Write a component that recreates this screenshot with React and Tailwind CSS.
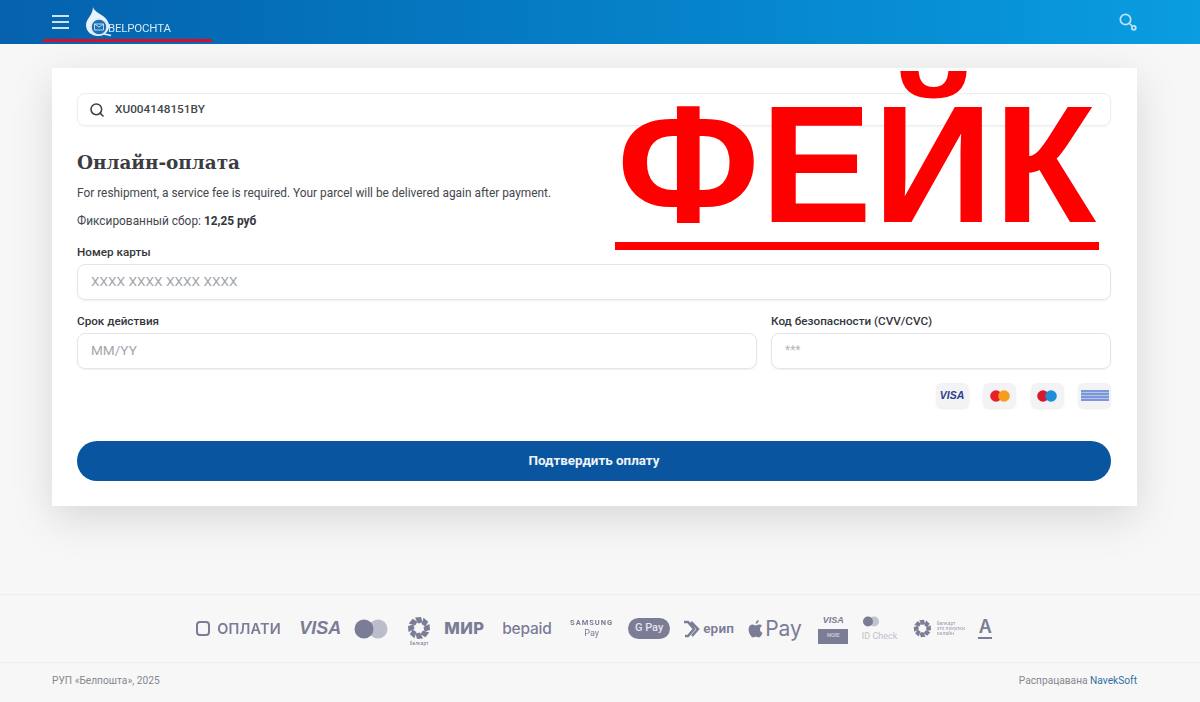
import { Search } from "lucide-react";

const grey = "#7b7c96";

const BelcardMark = ({ size }) => (
  <svg width={size} height={size} viewBox="0 0 24 24" fill={grey}>
    {[0, 45, 90, 135, 180, 225, 270, 315].map((a) => (
      <path key={a} d="M8 1.500l6-.5 1.500 5.500-4.500 1z" transform={`rotate(${a} 12 12)`} />
    ))}
  </svg>
);

const Logo = () => (
  <div className="flex items-end blur-[0.3px]">
    <svg width="27" height="30" viewBox="0 0 27 30" className="-mr-[4px]">
      <path d="M8 0c1 4 6 6 10 9 4 3 6 6 6 10 0 6-5 10-11 10S1 25 1 18C1 12 8 8 8 0z" fill="#e8f3fb" />
      <circle cx="14" cy="20" r="8" fill="#1c6fb4" stroke="#dcecf7" strokeWidth="1.500" />
      <path d="M9.500 17h9v6h-9zM9.500 17l4.500 3.200 4.500-3.200" fill="none" stroke="#cfe4f4" strokeWidth="0.900" />
      <path d="M19 27l7 1.500" stroke="#e8f3fb" strokeWidth="1.500" />
    </svg>
    <span className="font-['Roboto'] text-[11.500px] leading-[14px] text-[#d5e8f6] tracking-[-0.2px] mb-[2px]">BELPOCHTA</span>
  </div>
);

const Field = ({ label, placeholder, className, dim }) => (
  <div className={className}>
    <div className="text-[11.700px] leading-[19px] font-medium text-[#33363d]">{label}</div>
    <div className={`mt-[2px] h-[36px] flex items-center px-[13px] pb-[2px] rounded-lg border border-[#e3e5e9] shadow-[0_1px_2px_rgba(0,0,0,0.06)] ${dim ? "text-[12px] text-[#b4b6bc]" : "text-[13.600px] text-[#a3a6ad]"}`}>
      {placeholder}
    </div>
  </div>
);

const CardTile = ({ children }) => (
  <div className="w-[33px] h-[25px] flex items-center justify-center rounded-md bg-[#f3f3f5] shadow-[0_1px_2px_rgba(0,0,0,0.08)]">
    {children}
  </div>
);

const Circles = ({ left, right }) => (
  <svg width="20" height="12" viewBox="0 0 20 12">
    <circle cx="6" cy="6" r="5.800" fill={left} />
    <circle cx="14" cy="6" r="5.800" fill={right} />
  </svg>
);

const PayLogos = () => (
  <div className="h-[68px] border-t border-[#eeeef0] pr-[11px] flex items-center justify-center gap-[13px] font-['Roboto'] text-[#7b7c96]">
    <div className="flex items-center gap-[7px] blur-[0.3px]">
      <div className="w-[14px] h-[15px] rounded-[4px] border-[2.500px] border-[#7b7c96]" />
      <span className="font-['Inter'] font-semibold text-[14.500px] tracking-[0.2px] w-[69px] whitespace-nowrap">ОПЛАТИ</span>
    </div>
    <span className="font-['Liberation_Sans'] font-bold italic text-[18px] w-[40px]">VISA</span>
    <svg width="34" height="20" viewBox="0 0 34 20" className="mx-[2px]">
      <circle cx="24" cy="10" r="9.500" fill="#bcbdca" />
      <circle cx="10" cy="10" r="9.500" fill={grey} />
    </svg>
    <div className="flex flex-col items-center ml-[4px] mt-[6px] blur-[0.3px]">
      <BelcardMark size={24} />
      <span className="text-[5px] leading-[7px]">белкарт</span>
    </div>
    <span className="font-['Inter'] font-extrabold text-[16.500px] tracking-[0.5px] w-[45px] whitespace-nowrap">МИР</span>
    <span className="font-['Inter'] font-medium text-[15.500px] tracking-[-0.2px] w-[53px]">bepaid</span>
    <div className="flex flex-col items-center w-[47px] text-center blur-[0.3px]">
      <span className="font-bold text-[7.500px] leading-[10px] tracking-[1px]">SAMSUNG</span>
      <span className="text-[9px] leading-[11px]">Pay</span>
    </div>
    <div className="w-[42px] h-[21px] rounded-full bg-[#7b7c96] text-[#e4e4ea] flex items-center justify-center text-[11px] font-medium">G Pay</div>
    <div className="flex items-center gap-[2px] w-[52px]">
      <svg width="18" height="18" viewBox="0 0 18 18" fill="none" stroke={grey} strokeWidth="2.500">
        <path d="M1 2h4l6 7-6 7H2M8 2l7 7-6 7" />
      </svg>
      <span className="font-semibold text-[13.500px] tracking-[0.2px]">ерип</span>
    </div>
    <div className="flex items-center gap-[2px]">
      <svg width="15" height="18" viewBox="0 0 15 18" fill={grey}>
        <path d="M11 4.600c-1.500 0-2.200.9-3.300.9S5.800 4.600 4.500 4.600C2.500 4.600.6 6.400.6 9.600c0 3.500 2.600 7.900 4.500 7.900 1 0 1.500-.7 2.800-.7s1.700.7 2.800.7c1.700 0 3.300-3 3.800-4.700-1.500-.6-2.500-2-2.500-3.600 0-1.400.7-2.600 2-3.300-.7-1.200-2-1.800-3-1.300zM10.700 0c-1.700.2-3.100 1.800-3 3.700 1.600.1 3.200-1.700 3-3.700z" />
      </svg>
      <span className="font-['Inter'] text-[21px] leading-[24px]">Pay</span>
    </div>
    <div className="flex flex-col items-center w-[31px] ml-[3px]">
      <span className="font-['Liberation_Sans'] font-bold italic text-[9px] leading-[12px]">VISA</span>
      <div className="mt-[3px] w-[30px] h-[15px] bg-[#7b7c96] flex items-center justify-center text-[#c9c9d4] text-[4.500px] font-bold">MORE</div>
    </div>
    <div className="flex flex-col w-[38px]">
      <svg width="18" height="11" viewBox="0 0 18 11">
        <circle cx="12" cy="5.500" r="5" fill="#c2c3cf" />
        <circle cx="6" cy="5.500" r="5" fill={grey} />
      </svg>
      <span className="text-[9px] leading-[12px] mt-[3px] text-[#c0c1cc] whitespace-nowrap">ID Check</span>
    </div>
    <div className="flex items-center gap-[5px] w-[52px] blur-[0.3px]">
      <BelcardMark size={21} />
      <div className="flex flex-col text-[5px] leading-[5px] whitespace-nowrap text-[#9a9bb0]">
        <span>белкарт</span>
        <span>это покупки</span>
        <span>онлайн</span>
      </div>
    </div>
    <div className="flex flex-col items-center w-[15px]">
      <span className="font-['Inter'] font-semibold text-[18px] leading-[18px]">A</span>
      <div className="w-[14px] h-[2.500px] bg-[#7b7c96] mt-[1px]" />
    </div>
  </div>
);

export default function App() {
  return (
    <div className="relative h-[702px] overflow-hidden flex flex-col bg-[#f7f7f8] font-['Roboto',sans-serif] text-[#33363d]">
      <header className="relative h-[44px] shrink-0 flex items-center justify-between pl-[52px] pr-[63px] bg-gradient-to-r from-[#0561ad] to-[#0a9de0]">
        <div className="flex items-center gap-[16px]">
          <div className="flex flex-col gap-[4px] -mt-[1px]">
            <div className="w-[17px] h-[2px] bg-[#cfe2f2]" />
            <div className="w-[17px] h-[2px] bg-[#cfe2f2]" />
            <div className="w-[17px] h-[2px] bg-[#cfe2f2]" />
          </div>
          <Logo />
        </div>
        <svg width="18" height="18" viewBox="0 0 18 18" fill="none" stroke="#bfe3f5" strokeWidth="1.700" className="-mt-[1px]">
          <circle cx="6.500" cy="6.500" r="5.200" />
          <path d="M10.500 10.500l2.500 2.500" />
          <circle cx="14.800" cy="14.800" r="2" />
        </svg>
        <div className="absolute left-[43px] top-[39px] w-[169px] h-[3px] bg-[#d2102a]" />
      </header>

      <main className="flex-1 pl-[52px] pt-[24px] pr-[63px]">
        <section className="relative h-[438px] bg-white pl-[25px] pr-[26px] pt-[25px] shadow-[0_12px_40px_rgba(0,0,0,0.13)]">
          <div className="h-[33px] flex items-center gap-[10px] px-[11px] rounded-lg border border-[#eceded] shadow-[0_1px_2px_rgba(0,0,0,0.05)] text-[11.800px] font-medium text-[#44474e]">
            <Search size={16} strokeWidth={2.300} className="text-[#3c3f45]" />
            XU004148151BY
          </div>

          <h1 className="mt-[25px] font-['DejaVu_Serif',serif] font-bold text-[18.400px] leading-[24px] text-[#3a3c42]">Онлайн-оплата</h1>
          <p className="mt-[9px] text-[11.880px] leading-[18px] text-[#44474e]">
            For reshipment, a service fee is required. Your parcel will be delivered again after payment.
          </p>
          <p className="mt-[10px] text-[11.880px] leading-[18px] text-[#44474e]">
            Фиксированный сбор: <b className="font-bold text-[#33363d]">12,25 руб</b>
          </p>

          <Field className="mt-[13px]" label="Номер карты" placeholder="XXXX XXXX XXXX XXXX" />

          <div className="mt-[12px] flex gap-[14px]">
            <Field className="flex-1" label="Срок действия" placeholder="MM/YY" />
            <Field className="w-[340px]" label="Код безопасности (CVV/CVC)" placeholder="***" dim />
          </div>

          <div className="mt-[14px] flex justify-end gap-[14.500px]">
            <CardTile>
              <span className="font-['Liberation_Sans'] font-bold italic text-[10.500px] text-[#2b3f8e]">VISA</span>
            </CardTile>
            <CardTile><Circles left="#e8202a" right="#f59e1c" /></CardTile>
            <CardTile><Circles left="#d9182c" right="#1c8fd8" /></CardTile>
            <CardTile>
              <div className="w-[28px] h-[11px] bg-[repeating-linear-gradient(0deg,#7c97d8_0px,#7c97d8_2px,#b4c4ea_2px,#b4c4ea_3px)]" />
            </CardTile>
          </div>

          <div className="mt-[33px] h-[40px] rounded-full bg-[#0a559f] flex items-center justify-center text-[#eef3f9] text-[13.400px] font-bold">
            Подтвердить оплату
          </div>

          {/* штамп поверх формы */}
          <div className="absolute left-[565px] top-[3px] w-[490px] h-[170px] overflow-hidden">
            <div className="font-['Liberation_Sans'] font-bold text-[167px] leading-[210px] -mt-[12px] text-[#ff0000] whitespace-nowrap tracking-[1px]">
              ФЕЙК
            </div>
          </div>
          <div className="absolute left-[563px] top-[174px] w-[484px] h-[8px] bg-[#ff0000]" />
        </section>
      </main>

      <footer className="shrink-0">
        <PayLogos />
        <div className="h-[40px] border-t border-[#eeeef0] flex items-center justify-between pb-[3px] pl-[52px] pr-[63px] text-[10.200px] text-[#85878d]">
          <span>РУП «Белпошта», 2025</span>
          <span>Распрацавана <span className="text-[#2f6f9f]">NavekSoft</span></span>
        </div>
      </footer>
    </div>
  );
}
